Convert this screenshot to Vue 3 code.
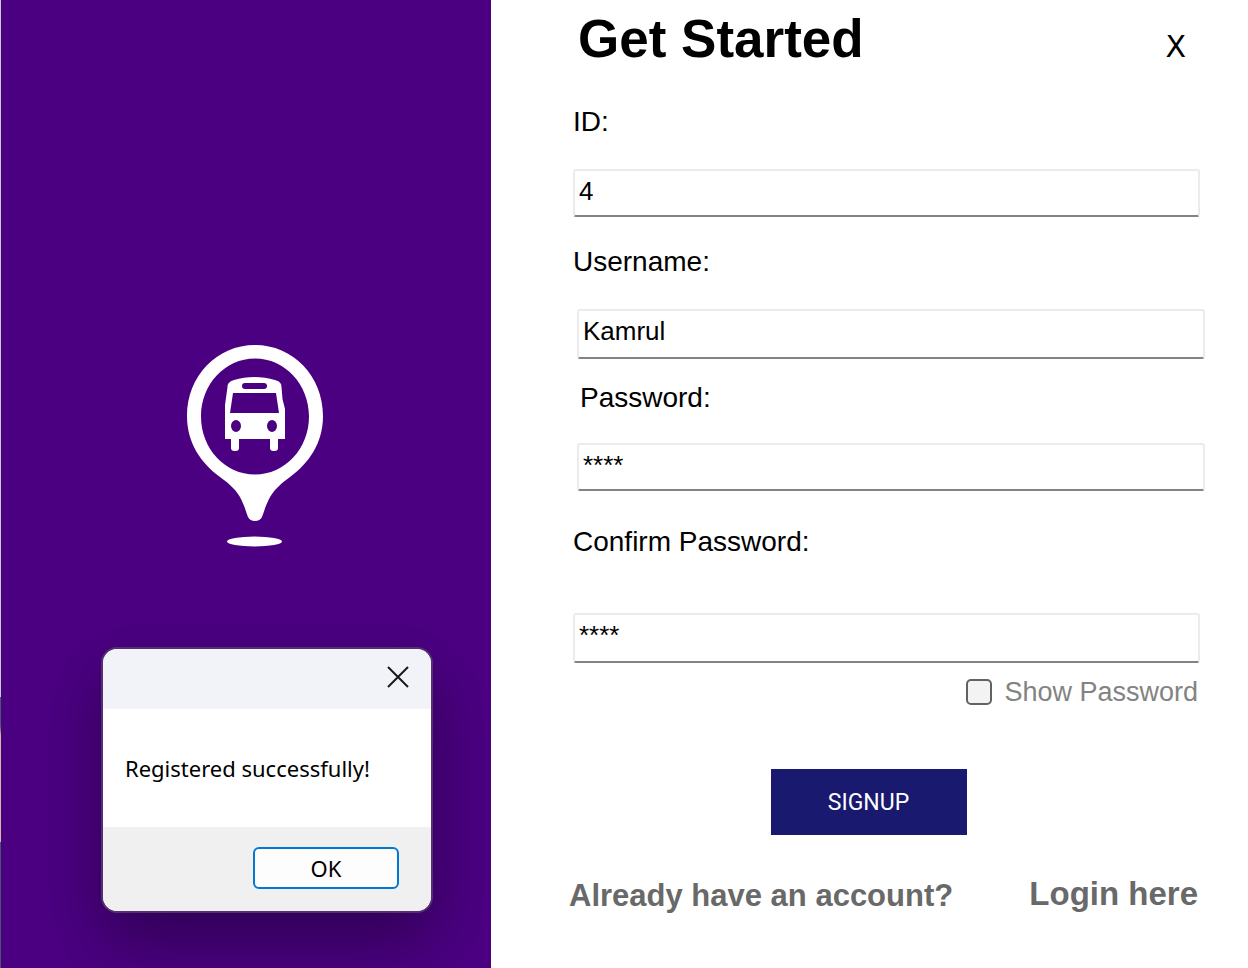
<script setup>
import { ref } from 'vue'

const id = ref('4')
const username = ref('Kamrul')
const password = ref('****')
const confirm = ref('****')
const show = ref(false)
</script>

<template>
  <main class="page">
    <aside class="brand">
      <svg class="logo" viewBox="0 0 170 230" aria-hidden="true">
        <path fill="#fff" fill-rule="evenodd" d="M85 15C47 15 17 46 17 86c0 27 14 47 33 61 10 7 17 14 21 22 4 8 5 13 7 18q2 4 7 4t7-4c2-5 3-10 7-18 4-8 11-15 21-22 19-14 33-34 33-61C153 46 123 15 85 15ZM85 28.500c30 0 54 26 54 58s-24 58-54 58-54-26-54-58 24-58 54-58Z" />
        <path fill="#fff" fill-rule="evenodd" d="M57.500 57c0-4 3-6 6.500-7 13-4 28-4 41 0 4 1 6.500 3 6.500 7l1 12 2.500 10v30h-7v9q0 3-3.500 3h-1q-3.500 0-3.500-3v-9H69v9q0 3-3.500 3h-1q-3.500 0-3.500-3v-9h-6V75ZM75 53q-3 0-3 3t3 3h19q3 0 3-3t-3-3ZM63 63l-3 20h49l-3-20ZM66 90a5 6 0 1 0 0 12a5 6 0 1 0 0-12ZM102 90a5 6 0 1 0 0 12a5 6 0 1 0 0-12Z" />
        <ellipse cx="84.500" cy="211.500" rx="27.500" ry="5" fill="#fff" />
      </svg>

      <section class="dialog" role="dialog" aria-label="Registered successfully!">
        <header class="dialog-title">
          <button class="dialog-close" type="button" aria-label="Close">
            <svg viewBox="0 0 22 22" width="22" height="22">
              <path d="M1 1 21 21M21 1 1 21" stroke="#191919" stroke-width="2" fill="none" />
            </svg>
          </button>
        </header>
        <p class="dialog-text">Registered successfully!</p>
        <footer class="dialog-actions">
          <button class="ok" type="button">OK</button>
        </footer>
      </section>
    </aside>

    <form class="signup" @submit.prevent>
      <header class="top">
        <h1>Get Started</h1>
        <button class="exit" type="button">X</button>
      </header>

      <div class="field">
        <label for="id">ID:</label>
        <input id="id" v-model="id" type="text">
      </div>
      <div class="field inset tall">
        <label for="username">Username:</label>
        <input id="username" v-model="username" type="text">
      </div>
      <div class="field inset secret">
        <label for="password">Password:</label>
        <input id="password" v-model="password" type="text">
      </div>
      <div class="field confirm tall">
        <label for="confirm">Confirm Password:</label>
        <input id="confirm" v-model="confirm" type="text">
      </div>

      <label class="show">
        <input v-model="show" type="checkbox">
        <span>Show Password</span>
      </label>

      <button class="submit" type="submit">SIGNUP</button>

      <footer class="login">
        <span>Already have an account?</span>
        <a href="#login">Login here</a>
      </footer>
    </form>
  </main>
</template>

<style>
body {
  margin: 0;
  background: #fff;
}
</style>

<style scoped>
* {
  box-sizing: border-box;
}

button,
input {
  font: inherit;
  color: inherit;
}

.page {
  display: grid;
  grid-template-columns: 491fr 757fr;
  min-height: 100vh;
  font-family: "Liberation Sans", Arial, sans-serif;
  color: #000;
}

.brand {
  position: relative;
  display: flex;
  flex-direction: column;
  align-items: center;
  padding: 330px 0 0 18px;
  background:
    linear-gradient(#c5cbd6 72%, #4a5870 72% 75%, #d8b8a4 76% 87%, #44586a 87%) left / 1px 100% no-repeat,
    #4b0082;
  overflow: hidden;
}

.logo {
  width: 170px;
  height: 230px;
}

.dialog {
  position: absolute;
  left: 101px;
  right: 58px;
  bottom: 55px;
  border: 2px solid #55306f;
  border-radius: 16px;
  background: #fff;
  background-clip: padding-box;
  box-shadow: 0 28px 64px rgba(0, 0, 0, 0.36);
  font-family: "Noto Sans", "Open Sans", sans-serif;
  overflow: hidden;
}

.dialog-title {
  display: flex;
  justify-content: flex-end;
  padding: 17px 22px;
  background: #f1f3f8;
}

.dialog-close {
  display: flex;
  padding: 0;
  height: 26px;
  border: 0;
  background: none;
}

.dialog-text {
  margin: 0;
  padding: 44px 22px;
  font-size: 22px;
  line-height: 30px;
  white-space: nowrap;
}

.dialog-actions {
  display: flex;
  justify-content: flex-end;
  padding: 20px 32px 22px;
  background: #f0f0f0;
}

.ok {
  width: 146px;
  height: 42px;
  padding: 0;
  border: 2px solid #0078d4;
  border-radius: 6px;
  background: #fdfdfd;
  font-size: 22px;
}

.signup {
  display: flex;
  flex-direction: column;
  padding: 0 48px 0 82px;
}

.top {
  display: flex;
  justify-content: space-between;
  padding: 9px 14px 0 5px;
  height: 106px;
}

h1 {
  margin: 0;
  font-size: 53px;
  line-height: 60px;
}

.exit {
  margin-top: 18px;
  padding: 0;
  height: 40px;
  border: 0;
  background: none;
  font-family: "DejaVu Sans", sans-serif;
  font-size: 30px;
  line-height: 40px;
}

.field {
  display: flex;
  flex-direction: column;
  gap: 31px;
  margin-bottom: 29px;
}

.field label {
  font-size: 28px;
  line-height: 32px;
}

.field input {
  width: 100%;
  height: 48px;
  padding: 0 4px 4px;
  border: 2px solid #ebebeb;
  border-bottom-color: #838383;
  border-radius: 3px;
  background: #fff;
  font-size: 26px;
  outline: 0;
}

.tall input {
  height: 50px;
  padding-bottom: 6px;
}

.inset {
  margin-right: -5px;
  margin-bottom: 23px;
}

.inset input {
  align-self: flex-end;
  width: calc(100% - 4px);
}

.secret {
  gap: 29px;
  margin-bottom: 35px;
}

.secret label {
  padding-left: 7px;
}

.confirm {
  gap: 55px;
  margin-bottom: 13px;
}

.show {
  display: flex;
  align-items: center;
  align-self: flex-end;
  gap: 12px;
  padding-right: 2px;
  color: #838383;
  font-size: 27px;
  line-height: 32px;
}

.show input {
  appearance: none;
  width: 26px;
  height: 26px;
  margin: 0;
  border: 2px solid #626262;
  border-radius: 5px;
  background: #f3f3f3;
}

.submit {
  align-self: center;
  width: 196px;
  height: 66px;
  margin: 61px 36px 0 0;
  padding: 0;
  border: 0;
  background: #191970;
  color: #fff;
  font-family: Roboto, sans-serif;
  font-size: 23px;
}

.login {
  display: flex;
  align-items: flex-end;
  justify-content: space-between;
  margin: 39px 2px 0 -4px;
  color: #696969;
  font-size: 31px;
  font-weight: bold;
  line-height: 44px;
  white-space: nowrap;
}

.login a {
  color: inherit;
  font-size: 33px;
  line-height: 40px;
  align-self: flex-start;
  text-decoration: none;
}
</style>
